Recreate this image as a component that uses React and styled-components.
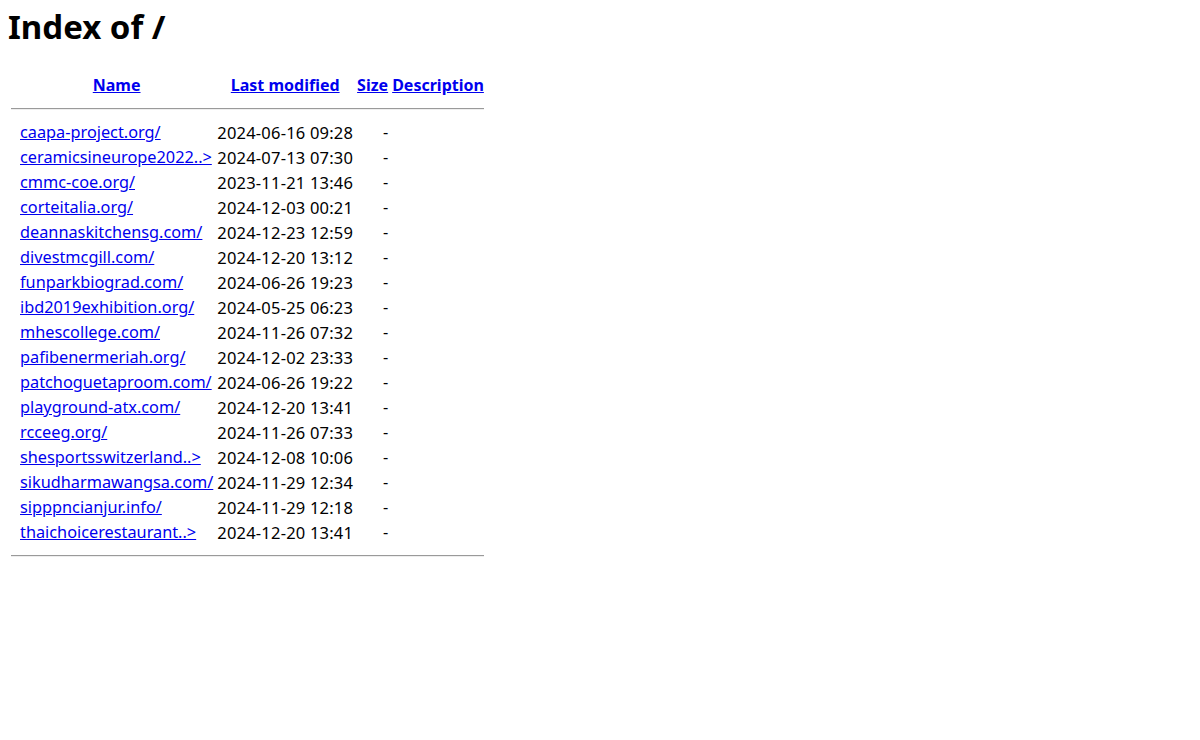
import React from "react";
import styled, { createGlobalStyle } from "styled-components";

const Global = createGlobalStyle`
  body {
    margin: 8px;
    background: #fff;
    color: #000;
    font-family: "Noto Sans", "Open Sans", sans-serif;
    font-size: 16px;
  }
`;

const Title = styled.h1`
  font-size: 33px;
  font-weight: 700;
  margin: 0 0 26px;
  line-height: 38px;
`;

const Table = styled.table`
  border-spacing: 2px;
  font-size: 16px;
  line-height: 21px;
`;

const Th = styled.th`
  padding: 1px;
  font-weight: 700;
  text-align: center;
  vertical-align: middle;
`;

const Td = styled.td`
  padding: 1px;
  font-size: ${(p) => (p.$date ? "16.5px" : "16.3px")};
  letter-spacing: ${(p) => (p.$date ? "0.2px" : "0")};
  text-align: ${(p) => p.$align || "left"};
  white-space: nowrap;
`;

const IconCell = styled.td`
  padding: 1px;
  width: 5px;
`;

const Link = styled.a`
  color: #0000ee;
  text-decoration: underline;
`;

const Rule = styled.hr`
  border: none;
  border-top: 1px solid #9a9a9a;
  border-bottom: 1px solid #eee;
  margin: 8px 0;
`;

const rows = [
  ["caapa-project.org/", "2024-06-16 09:28"],
  ["ceramicsineurope2022..>", "2024-07-13 07:30"],
  ["cmmc-coe.org/", "2023-11-21 13:46"],
  ["corteitalia.org/", "2024-12-03 00:21"],
  ["deannaskitchensg.com/", "2024-12-23 12:59"],
  ["divestmcgill.com/", "2024-12-20 13:12"],
  ["funparkbiograd.com/", "2024-06-26 19:23"],
  ["ibd2019exhibition.org/", "2024-05-25 06:23"],
  ["mhescollege.com/", "2024-11-26 07:32"],
  ["pafibenermeriah.org/", "2024-12-02 23:33"],
  ["patchoguetaproom.com/", "2024-06-26 19:22"],
  ["playground-atx.com/", "2024-12-20 13:41"],
  ["rcceeg.org/", "2024-11-26 07:33"],
  ["shesportsswitzerland..>", "2024-12-08 10:06"],
  ["sikudharmawangsa.com/", "2024-11-29 12:34"],
  ["sipppncianjur.info/", "2024-11-29 12:18"],
  ["thaichoicerestaurant..>", "2024-12-20 13:41"],
];

export default function App() {
  return (
    <>
      <Global />
      <Title>Index of /</Title>
      <Table>
        <tbody>
          <tr>
            <Th></Th>
            <Th><Link href="#">Name</Link></Th>
            <Th><Link href="#">Last modified</Link></Th>
            <Th><Link href="#">Size</Link></Th>
            <Th><Link href="#">Description</Link></Th>
          </tr>
          <tr>
            <Th colSpan={5}><Rule /></Th>
          </tr>
          {rows.map(([name, date]) => (
            <tr key={name}>
              <IconCell />
              <Td><Link href="#">{name}</Link></Td>
              <Td $align="right" $date>{date}</Td>
              <Td $align="right">-</Td>
              <Td>&nbsp;</Td>
            </tr>
          ))}
          <tr>
            <Th colSpan={5}><Rule /></Th>
          </tr>
        </tbody>
      </Table>
    </>
  );
}
